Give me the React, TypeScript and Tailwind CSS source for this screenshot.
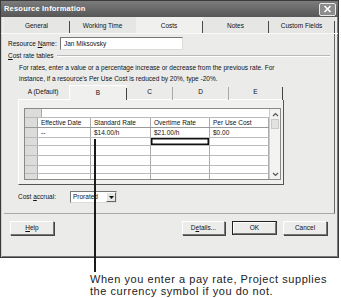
import React from 'react';

const topTabs = [
    { label: 'General', w: 'w-[66px]', divider: true },
    { label: 'Working Time', w: 'w-[66px]', divider: false },
    { label: 'Costs', w: 'w-[67px]', divider: true, active: true },
    { label: 'Notes', w: 'w-[66px]', divider: true },
    { label: 'Custom Fields', w: 'w-[66px]', divider: true },
];

const rateTabs = [
    { label: 'A (Default)', w: 'w-[51px]', divider: 'none' },
    { label: 'B', w: 'w-[58px]', divider: 'dark', active: true },
    { label: 'C', w: 'w-[46px]', divider: 'light' },
    { label: 'D', w: 'w-[56px]', divider: 'light' },
    { label: 'E', w: 'w-[54px]', divider: 'dark' },
];

const rowHeights = ['h-[10px]', 'h-[9px]', 'h-[10px]', 'h-[10px]', 'h-[9px]', 'h-[5px]'];
const firstRow = ['--', '$14.00/h', '$21.00/h', '$0.00'];

function Chevron({ up }: { up?: boolean }) {
    return (
        <svg width="7" height="5" viewBox="0 0 7 5">
            <polyline
                points={up ? '1,4 3.5,1.5 6,4' : '1,1 3.5,3.5 6,1'}
                fill="none"
                stroke="#555"
                strokeWidth="1.2"
            />
        </svg>
    );
}

function Button({ children, w, isDefault }: { children: React.ReactNode; w: string; isDefault?: boolean }) {
    return (
        <div className={`${w} h-[14px] ${isDefault ? 'border border-[#222]' : ''}`}>
            <div className="w-full h-full flex items-center justify-center bg-[#ececea] border border-t-white border-l-white border-r-[#777] border-b-[#777] shadow-[1px_1px_0_#444]">
                {children}
            </div>
        </div>
    );
}

export default function App() {
    return (
        <div className="relative w-[341px] h-[298px] bg-white overflow-hidden font-['Liberation_Sans',Arial,sans-serif] text-[#111]">
            {/* window */}
            <div className="w-[339px] h-[258px] border border-[#3a3a3a] bg-[#ebebe9] flex flex-col shadow-[inset_1px_1px_0_#cfcfcf,inset_-1px_-1px_0_#7a7a7a]">
                {/* title bar */}
                <div className="h-[16px] shrink-0 flex items-center justify-between bg-gradient-to-b from-[#7c7c7c] to-[#575757] pl-[3px] pr-[2px]">
                    <span className="text-white font-bold text-[7.5px] tracking-[0.2px]">Resource Information</span>
                    <div className="w-[17px] h-[13px] border border-[#e8e8e8] rounded-[2px] bg-[#8c8c8c] flex items-center justify-center">
                        <svg width="9" height="8" viewBox="0 0 9 8">
                            <path d="M1.5 1 L7.5 7 M7.5 1 L1.5 7" stroke="white" strokeWidth="1.6" />
                        </svg>
                    </div>
                </div>

                {/* tabs */}
                <div className="h-[17px] shrink-0 flex pl-[3px] border-b border-[#fafafa]">
                    {topTabs.map((t) => (
                        <div
                            key={t.label}
                            className={`${t.w} h-full flex items-center text-[6.5px] ${t.active ? 'bg-[#f0f0ee]' : 'bg-[#e6e6e4]'}`}
                        >
                            <span className="flex-1 text-center pt-[1px]">{t.label}</span>
                            <span className={`w-[1px] h-[12px] mt-[3px] ${t.divider ? 'bg-[#4a4a4a]' : 'bg-transparent'}`} />
                        </div>
                    ))}
                </div>

                {/* tab panel */}
                <div className="h-[180px] shrink-0 mx-[3px] border-r border-[#6a6a6a] border-b border-b-[#a8a8a8] flex flex-col text-[6.5px]">
                    <div className="flex items-center h-[13px] mt-[3px] pl-[4px]">
                        <span className="w-[52px]">
                            Resource <span className="underline">N</span>ame:
                        </span>
                        <div className="w-[123px] h-[13px] bg-white border border-t-[#777] border-l-[#777] border-r-[#ddd] border-b-[#ddd] flex items-center pl-[3px]">
                            Jan Miksovsky
                        </div>
                    </div>

                    <div className="flex items-center h-[9px] mt-[1px] pl-[4px] pr-[4px]">
                        <span>
                            <span className="underline">C</span>ost rate tables
                        </span>
                        <div className="flex-1 ml-[3px] h-[2px] border-t border-[#b8b8b8] border-b border-b-white" />
                    </div>

                    <div className="pl-[15px] mt-[3px] leading-[10.5px]">
                        <div>For rates, enter a value or a percentage increase or decrease from the previous rate. For</div>
                        <div>instance, if a resource's Per Use Cost is reduced by 20%, type -20%.</div>
                    </div>

                    {/* rate tabs */}
                    <div className="flex h-[15px] mt-[1px] ml-[14px]">
                        {rateTabs.map((t) => (
                            <div
                                key={t.label}
                                className={`${t.w} h-full flex items-center ${t.active ? 'bg-[#f0f0ee] border-t border-l border-white' : 'border-b border-white'}`}
                            >
                                <span className="flex-1 text-center">{t.label}</span>
                                <span
                                    className={`w-[1px] h-[13px] mt-[2px] ${t.divider === 'dark' ? 'bg-[#444]' : t.divider === 'light' ? 'bg-[#aaa]' : 'bg-transparent'}`}
                                />
                            </div>
                        ))}
                    </div>

                    {/* rate panel */}
                    <div className="w-[266px] h-[85px] ml-[14px] bg-[#f0f0ee] border-l border-white border-r border-r-[#555] border-b border-b-[#555] pl-[5px] pt-[8px]">
                        <div className="w-[257px] h-[72px] flex border border-[#8a8a8a] bg-white">
                            <div className="w-[244px] flex flex-col">
                                <div className="h-[9px] flex border-b border-[#bbb]">
                                    <div className="w-[17px] bg-[#dcdcda] border-r border-[#aaa]" />
                                    <div className="flex-1" />
                                </div>
                                <div className="h-[10px] grid grid-cols-[13px_53px_60px_59px_59px] border-b border-[#999]">
                                    <div className="bg-[#dcdcda] border-r border-[#aaa]" />
                                    {['Effective Date', 'Standard Rate', 'Overtime Rate', 'Per Use Cost'].map((h) => (
                                        <div key={h} className="border-r border-[#aaa] pl-[3px] flex items-center">
                                            {h}
                                        </div>
                                    ))}
                                </div>
                                {rowHeights.map((rh, i) => (
                                    <div key={i} className={`${rh} grid grid-cols-[13px_53px_60px_59px_59px] ${i < 5 ? 'border-b border-[#bbb]' : ''}`}>
                                        <div className="bg-[#dcdcda] border-r border-[#aaa]" />
                                        {[0, 1, 2, 3].map((c) => (
                                            <div
                                                key={c}
                                                className={`border-r border-[#aaa] pl-[3px] flex items-center ${i === 1 && c === 2 ? 'shadow-[inset_0_0_0_1.5px_#111]' : ''}`}
                                            >
                                                {i === 0 ? firstRow[c] : ''}
                                            </div>
                                        ))}
                                    </div>
                                ))}
                            </div>
                            {/* scrollbar */}
                            <div className="flex-1 flex flex-col bg-[#f3f3f1] border-l border-[#ccc]">
                                <div className="h-[10px] flex items-center justify-center">
                                    <Chevron up />
                                </div>
                                <div className="h-[10px] mx-[1px] bg-[#e2e2e0] border border-[#c8c8c8]" />
                                <div className="flex-1" />
                                <div className="h-[10px] flex items-center justify-center">
                                    <Chevron />
                                </div>
                            </div>
                        </div>
                    </div>

                    <div className="flex items-center h-[12px] mt-[6px] pl-[14px]">
                        <span className="w-[52px]">
                            Cost <span className="underline">a</span>ccrual:
                        </span>
                        <div className="w-[47px] h-[12px] bg-white border border-t-[#777] border-l-[#777] border-r-[#ddd] border-b-[#ddd] flex items-center">
                            <span className="flex-1 pl-[2px]">Prorated</span>
                            <div className="w-[10px] h-[10px] bg-[#e6e6e4] border border-t-white border-l-white border-r-[#666] border-b-[#666] flex items-center justify-center">
                                <svg width="5" height="3" viewBox="0 0 5 3">
                                    <path d="M0 0 L5 0 L2.5 3 Z" fill="#111" />
                                </svg>
                            </div>
                        </div>
                    </div>
                </div>

                {/* buttons */}
                <div className="flex items-center mt-[7px] pl-[9px] text-[6.5px]">
                    <Button w="w-[44px]">
                        <span className="underline">H</span>elp
                    </Button>
                    <div className="w-[128px]" />
                    <Button w="w-[43px]">
                        D<span className="underline">e</span>tails...
                    </Button>
                    <div className="w-[7px]" />
                    <Button w="w-[45px]" isDefault>
                        OK
                    </Button>
                    <div className="w-[6px]" />
                    <Button w="w-[44px]">Cancel</Button>
                </div>
            </div>

            {/* callout */}
            <div className="pl-[90px] mt-[15px] text-[11px] leading-[12px] tracking-[0.55px] text-[#222]">
                <div>When you enter a pay rate, Project supplies</div>
                <div>the currency symbol if you do not.</div>
            </div>
            <div className="absolute left-[94px] top-[139px] w-[2px] h-[133px] bg-[#1a1a1a]" />
        </div>
    );
}
